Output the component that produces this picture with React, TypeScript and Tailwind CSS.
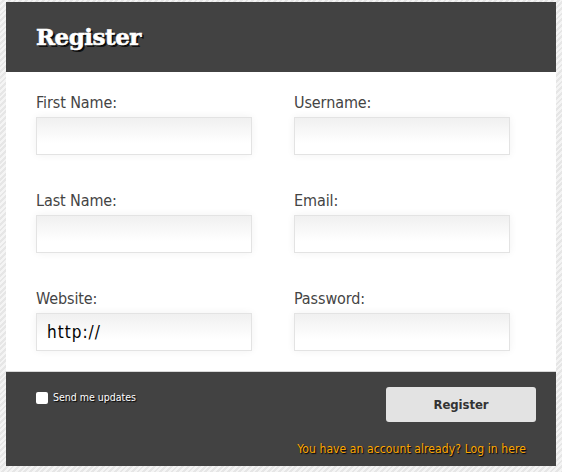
const sans = "font-['DejaVu_Sans',sans-serif] [font-stretch:condensed]";

const fields = [
  { label: 'First Name:' },
  { label: 'Username:' },
  { label: 'Last Name:' },
  { label: 'Email:' },
  { label: 'Website:', value: 'http://' },
  { label: 'Password:' },
];

function Field({ label, value }: { label: string; value?: string }) {
  return (
    <label className="block h-[98px]">
      <span className="block h-[25px] pt-[1px] text-[16px] leading-[20px] tracking-[-0.1px] text-[#444444]">{label}</span>
      <input
        type="text"
        defaultValue={value}
        className="block h-[38px] w-[216px] border border-[#e3e3e3] bg-[linear-gradient(#f0f0f0,#ffffff_70%)] px-[10px] text-[17px] tracking-[1px] text-black shadow-[0_0_8px_rgba(0,0,0,0.06)] outline-none"
      />
    </label>
  );
}

export default function App() {
  return (
    <div className={`h-[472px] w-[562px] overflow-hidden bg-[#e9e9e9] bg-[repeating-linear-gradient(135deg,#f4f4f4_0px,#f4f4f4_2px,#e6e6e6_2px,#e6e6e6_4px)] px-[6px] pt-[2px] ${sans}`}>
      <div className="w-[550px] bg-white">
        <div className="flex h-[70px] items-center bg-[#424242] pl-[30px] pt-[1px]">
          <h1 className="font-['DejaVu_Serif',serif] text-[23px] font-bold tracking-[-0.5px] text-white [font-stretch:normal] [-webkit-text-stroke:0.6px_#fff] [text-shadow:1px_1px_0_#000,2px_2px_0_#111]">
            Register
          </h1>
        </div>
        <div className="grid h-[300px] grid-cols-[258px_1fr] border-b border-[#d8d8d8] pl-[30px] pt-[20px]">
          {fields.map((f) => (
            <Field key={f.label} label={f.label} value={f.value} />
          ))}
        </div>
        <div className="flex h-[94px] justify-between bg-[#424242] pl-[30px] pr-[20px] pt-[15px]">
          <label className="flex h-[22px] items-center gap-[5px] text-[10.5px] text-white [text-shadow:1px_1px_1px_#000]">
            <input type="checkbox" className="h-[12px] w-[12px] appearance-none rounded-[2px] bg-white" />
            Send me updates
          </label>
          <div className="flex flex-col items-end">
            <button
              type="button"
              className="h-[35px] w-[150px] rounded-[3px] bg-[#e3e3e3] text-[13px] font-bold tracking-[-0.1px] text-[#333333]"
            >
              Register
            </button>
            <a className="mt-[19px] mr-[10px] text-[12px] leading-[16px] tracking-[0.1px] text-[#ffa800] [text-shadow:1px_1px_1px_#000]">
              You have an account already? Log in here
            </a>
          </div>
        </div>
      </div>
    </div>
  );
}
